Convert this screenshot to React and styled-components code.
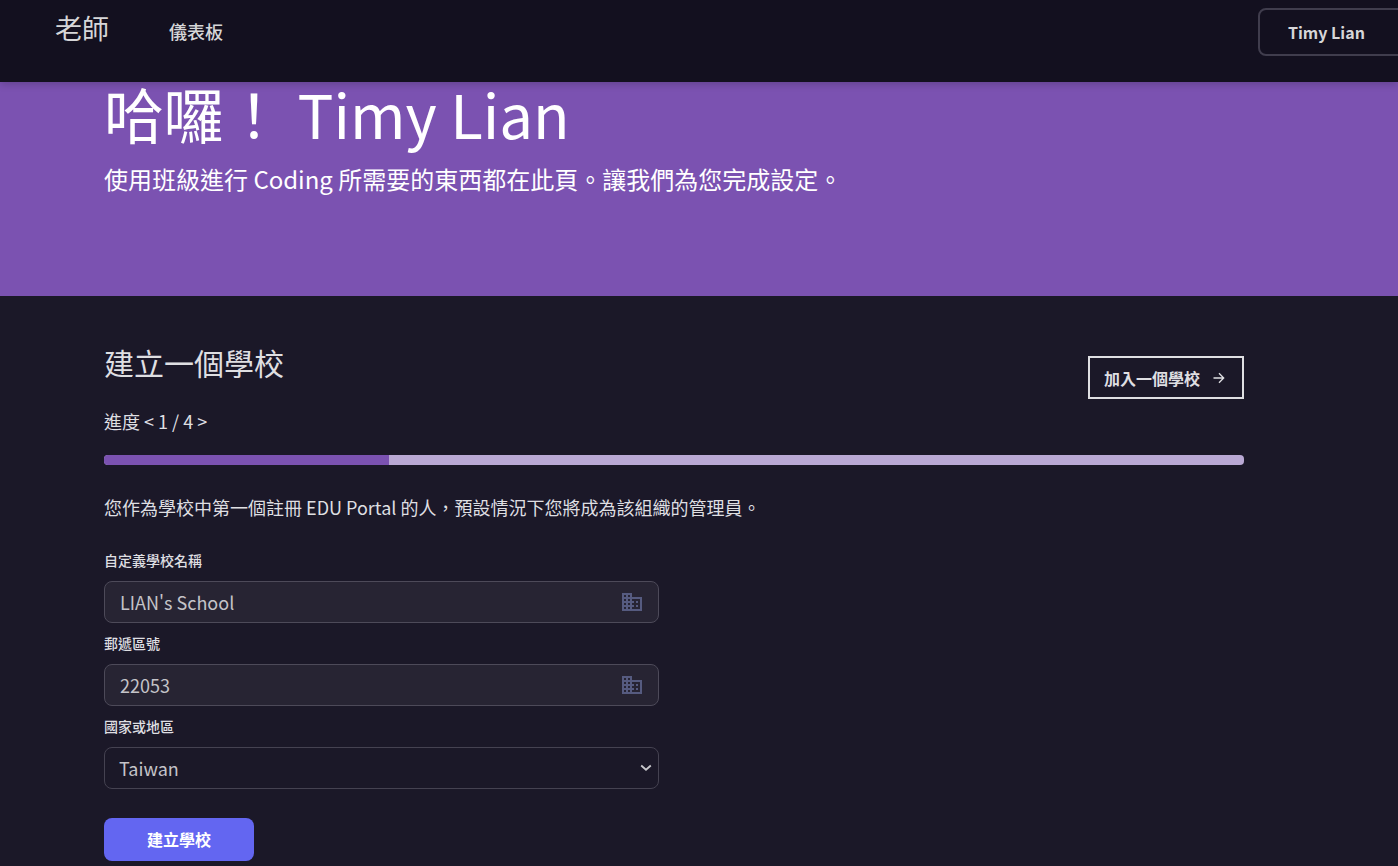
import React from "react";
import styled, { createGlobalStyle } from "styled-components";
import { MdBusiness } from "react-icons/md";

const GlobalStyle = createGlobalStyle`
  *, *::before, *::after { box-sizing: border-box; }
  html { background: #1b1828; }
  body {
    margin: 0;
    overflow-x: hidden;
    color: #dfdfe2;
    font-family: "Noto Sans CJK TC", "Noto Sans", sans-serif;
    font-size: 18px;
    font-weight: 400;
    line-height: 24px;
  }
  input, select, button { font-family: inherit; }
`;

const Header = styled.header`
  position: relative;
  display: flex;
  align-items: flex-start;
  height: 82px;
  padding: 8px 0 0 55px;
  background: #13101f;
  box-shadow: 0 2px 8px rgba(0, 0, 0, 0.2);
`;

const Brand = styled.a`
  color: #d6d6d8;
  font-size: 27px;
  line-height: 40px;
  text-decoration: none;
`;

const Nav = styled.nav`
  flex: 1;
  margin-left: 60px;
`;

const NavLink = styled.a`
  color: #d6d6d8;
  font-weight: 500;
  line-height: 46px;
  text-decoration: none;
`;

const AccountButton = styled.button`
  flex: none;
  width: 164px;
  height: 48px;
  margin-right: -24px;
  padding: 0 28px;
  border: 2px solid #403d4d;
  border-radius: 8px;
  background: transparent;
  color: #d6d6d8;
  font-size: 16px;
  font-weight: 700;
  text-align: left;
`;

const Hero = styled.section`
  min-height: 214px;
  padding: 0 104px;
  background: #7b52b1;
  color: #fff;
`;

const HeroTitle = styled.h1`
  margin: 0;
  font-size: 60px;
  font-weight: 400;
  line-height: 62px;
`;

const HeroText = styled.p`
  margin: 17px 0 0;
  font-size: 24px;
  line-height: 36px;
`;

const Main = styled.main`
  padding: 44px 154px 5px 104px;
`;

const TitleRow = styled.div`
  display: flex;
  align-items: flex-start;
  justify-content: space-between;
`;

const Title = styled.h2`
  margin: 0;
  font-size: 30px;
  font-weight: 400;
  line-height: 44px;
`;

const JoinButton = styled.button`
  display: flex;
  align-items: center;
  gap: 12px;
  height: 43px;
  margin-top: 16px;
  padding: 0 16px 0 14px;
  border: 2px solid #dfdfe2;
  background: transparent;
  color: #dfdfe2;
  font-size: 16px;
  font-weight: 700;
`;

const ProgressLabel = styled.p`
  margin: 10px 0 22px;
`;

const Track = styled.div`
  height: 10px;
  overflow: hidden;
  border-radius: 4px;
  background: #b9a8d4;
`;

const Bar = styled.div`
  height: 100%;
  background: #7b52b1;
`;

const Note = styled.p`
  margin: 30px 0;
`;

const Form = styled.form`
  max-width: 555px;
`;

const Label = styled.label`
  display: block;
  height: 32px;
  font-size: 14px;
  font-weight: 500;
  line-height: 22px;
`;

const Field = styled.div`
  position: relative;
  margin-bottom: 9px;
`;

const Input = styled.input`
  display: block;
  width: 100%;
  height: 42px;
  padding: 0 48px 0 15px;
  border: 1px solid #4d4a59;
  border-radius: 8px;
  background: #272433;
  color: #c4c3c8;
  font-size: 18px;
`;

const FieldIcon = styled.span`
  position: absolute;
  right: ${({ $right }) => $right}px;
  bottom: 0;
  display: flex;
  align-items: center;
  height: 42px;
  color: ${({ $color }) => $color};
  pointer-events: none;
`;

const Select = styled.select`
  appearance: none;
  display: block;
  width: 100%;
  height: 42px;
  padding: 0 32px 0 14px;
  border: 1px solid #454251;
  border-radius: 8px;
  background: #1b1828;
  color: #c4c3c8;
  font-size: 18px;
`;

const SubmitButton = styled.button`
  width: 150px;
  height: 43px;
  margin-top: 20px;
  padding: 0 0 2px;
  border: 0;
  border-radius: 8px;
  background: #6366f1;
  color: #fff;
  font-size: 16px;
  font-weight: 700;
`;

const TextField = ({ id, label, value }) => (
  <Field>
    <Label htmlFor={id}>{label}</Label>
    <Input id={id} type="text" defaultValue={value} />
    <FieldIcon $right={15} $color="#565b80">
      <MdBusiness size={24} aria-hidden="true" />
    </FieldIcon>
  </Field>
);

const Arrow = () => (
  <svg width="14" height="14" viewBox="0 0 14 14" fill="none" stroke="currentColor" strokeWidth="1.3" aria-hidden="true">
    <path d="M1.5 7H11.5M7 2.2L11.7 7L7 11.8" />
  </svg>
);

const Chevron = () => (
  <svg width="12" height="12" viewBox="0 0 12 12" fill="none" stroke="currentColor" strokeWidth="1.8" aria-hidden="true">
    <path d="M1.2 3.5L6 7.7L10.8 3.5" />
  </svg>
);

export default function App() {
  const step = 1;
  const steps = 4;
  return (
    <div lang="zh-Hant">
      <GlobalStyle />
      <Header>
        <Brand href="#">老師</Brand>
        <Nav>
          <NavLink href="#">儀表板</NavLink>
        </Nav>
        <AccountButton type="button">Timy Lian</AccountButton>
      </Header>
      <Hero>
        <HeroTitle>哈囉！ Timy Lian</HeroTitle>
        <HeroText>使用班級進行 Coding 所需要的東西都在此頁。讓我們為您完成設定。</HeroText>
      </Hero>
      <Main>
        <TitleRow>
          <Title>建立一個學校</Title>
          <JoinButton type="button">
            加入一個學校
            <Arrow />
          </JoinButton>
        </TitleRow>
        <ProgressLabel>進度 &lt; {step} / {steps} &gt;</ProgressLabel>
        <Track role="progressbar" aria-label="進度" aria-valuenow={step} aria-valuemin={0} aria-valuemax={steps}>
          <Bar style={{ width: `${(step / steps) * 100}%` }} />
        </Track>
        <Note>您作為學校中第一個註冊 EDU Portal 的人，預設情況下您將成為該組織的管理員。</Note>
        <Form onSubmit={(event) => event.preventDefault()}>
          <TextField id="school" label="自定義學校名稱" value="LIAN's School" />
          <TextField id="postcode" label="郵遞區號" value="22053" />
          <Field>
            <Label htmlFor="country">國家或地區</Label>
            <Select id="country" defaultValue="Taiwan">
              <option>Taiwan</option>
            </Select>
            <FieldIcon $right={7} $color="#c9c9cd">
              <Chevron />
            </FieldIcon>
          </Field>
          <SubmitButton type="submit">建立學校</SubmitButton>
        </Form>
      </Main>
    </div>
  );
}
